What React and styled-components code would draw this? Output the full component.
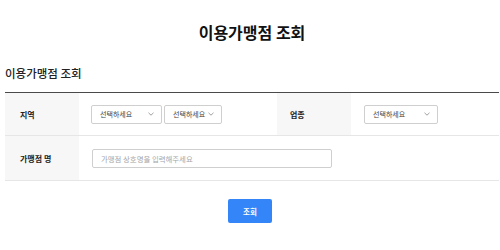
import React from "react";
import styled, { createGlobalStyle } from "styled-components";

const GlobalStyle = createGlobalStyle`
  body {
    margin: 0;
    background: #fff;
    font-family: "Noto Sans CJK KR", "Noto Sans", sans-serif;
    color: #222;
  }
`;

const Page = styled.div`
  width: 500px;
  padding: 0 1px 0 5px;
  box-sizing: border-box;
`;

const Title = styled.h1`
  margin: 22px 0 0;
  font-size: 16px;
  line-height: 20px;
  font-weight: 700;
  text-align: center;
  color: #111;
`;

const SubTitle = styled.h2`
  margin: 23px 0 11px;
  font-size: 11.5px;
  line-height: 16px;
  font-weight: 500;
  color: #222;
`;

const Table = styled.div`
  border-top: 1px solid #4a4a4a;
`;

const Row = styled.div`
  display: grid;
  grid-template-columns: 74px 198px 74px 1fr;
  height: ${(p) => p.height}px;
  border-bottom: 1px solid #e6e6e6;
`;

const Label = styled.div`
  display: flex;
  align-items: center;
  padding-left: ${(p) => p.indent || 15}px;
  background: #f7f7f7;
  font-size: 8px;
  font-weight: 700;
  color: #222;
`;

const Cell = styled.div`
  display: flex;
  align-items: center;
  gap: 2px;
  padding-left: ${(p) => p.indent || 12}px;
  grid-column: ${(p) => p.span || "auto"};
`;

const SelectBox = styled.div`
  display: flex;
  align-items: center;
  justify-content: space-between;
  box-sizing: border-box;
  width: ${(p) => (p.width ? `${p.width}px` : "auto")};
  gap: 3px;
  height: 19px;
  padding: 0 7px 0 8px;
  border: 1px solid #cfcfcf;
  border-radius: 2px;
  font-size: 7px;
  color: #444;
  background: #fff;
`;

const TextInput = styled.input`
  box-sizing: border-box;
  width: 240px;
  height: 19px;
  padding: 0 8px;
  border: 1px solid #cfcfcf;
  border-radius: 2px;
  font-family: inherit;
  font-size: 7.4px;
  color: #444;
  outline: none;

  &::placeholder {
    color: #a5a5a5;
  }
`;

const ButtonWrap = styled.div`
  display: flex;
  justify-content: center;
  padding: 18px 0 0;
  margin-left: -4px;
`;

const SearchButton = styled.button`
  width: 44px;
  height: 24px;
  border: none;
  border-radius: 2px;
  background: #3485f7;
  color: #fff;
  font-family: inherit;
  font-size: 7.5px;
  font-weight: 700;
  cursor: pointer;
`;

function Chevron() {
  return (
    <svg width="6" height="4" viewBox="0 0 6 4">
      <polyline points="0.5,0.8 3,3.2 5.5,0.8" fill="none" stroke="#888" strokeWidth="0.8" />
    </svg>
  );
}

function Select({ width }) {
  return (
    <SelectBox width={width}>
      <span>선택하세요</span>
      <Chevron />
    </SelectBox>
  );
}

export default function App() {
  return (
    <Page>
      <GlobalStyle />
      <Title>이용가맹점 조회</Title>
      <SubTitle>이용가맹점 조회</SubTitle>
      <Table>
        <Row height={42}>
          <Label>지역</Label>
          <Cell>
            <Select width={71} />
            <Select />
          </Cell>
          <Label indent={13}>업종</Label>
          <Cell indent={13}>
            <Select width={74} />
          </Cell>
        </Row>
        <Row height={44}>
          <Label>가맹점 명</Label>
          <Cell span="2 / 5" indent={13}>
            <TextInput placeholder="가맹점 상호명을 입력해주세요" />
          </Cell>
        </Row>
      </Table>
      <ButtonWrap>
        <SearchButton>조회</SearchButton>
      </ButtonWrap>
    </Page>
  );
}
